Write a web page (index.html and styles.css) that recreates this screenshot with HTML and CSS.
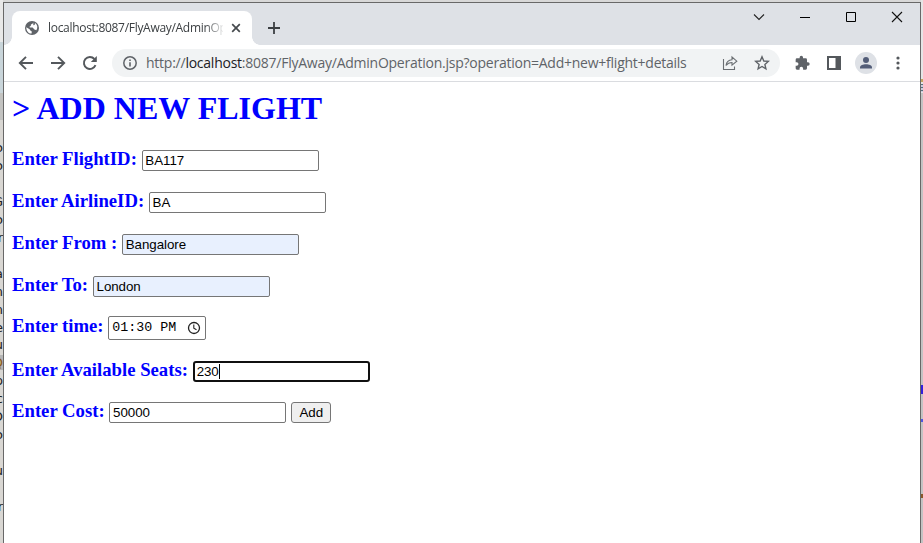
FILE: index.html
```
<!DOCTYPE html>
<html lang="en">
<head>
<meta charset="utf-8">
<title>Add new flight</title>
<link rel="stylesheet" href="styles.css">
</head>
<body>
<div class="desktop">
  <div class="edge-left"><i class="edge-pane"></i><pre class="code">o
o

G
so
r

a
n
n
e
u
<span class="mark">Q</span>
p
c
O
o

u

r</pre></div>
  <div class="window">
    <header class="tabs">
      <div class="tab">
        <svg class="globe" width="14" height="14" viewBox="0 0 14 14"><circle cx="7" cy="7" r="7" fill="#5f6368"/><path d="M1.3 6.2 4.6 8.2 5.6 9.8 6.8 10.6 6.6 12.6C3.6 12.6 1.2 10 1.3 6.2ZM8.2 1.4C7.6 3 6.5 3 5.9 3.6L5.8 5 4.6 5.6 4.8 6.4 7.6 6.6 9.4 8.4 11.4 9.2C13 6.6 12.6 3.6 10 2L9.6 4 8.4 4.2Z" fill="#fff"/></svg>
        <span class="tab-title">localhost:8087/FlyAway/AdminOperation</span>
        <svg class="tab-close" width="10" height="10" viewBox="0 0 10 10"><path d="M1.2 1.2 8.8 8.8M8.8 1.2 1.2 8.8" stroke="#45494d" stroke-width="1.7"/></svg>
      </div>
      <svg class="new-tab" width="12" height="12" viewBox="0 0 12 12"><path d="M6 0V12M0 6H12" stroke="#3c4043" stroke-width="1.8"/></svg>
      <div class="controls">
        <svg width="12" height="12" viewBox="0 0 12 12"><path d="M1 3.5 6 8.5 11 3.5" fill="none" stroke="#222" stroke-width="1.1"/></svg>
        <svg width="12" height="12" viewBox="0 0 12 12"><path d="M1 6.5H11" stroke="#000"/></svg>
        <svg width="12" height="12" viewBox="0 0 12 12"><path d="M1.5 1.5H10.500V10.500H1.500Z" fill="none" stroke="#000"/></svg>
        <svg width="12" height="12" viewBox="0 0 12 12"><path d="M1 1 11 11M11 1 1 11" stroke="#111" stroke-width="1.1"/></svg>
      </div>
    </header>
    <nav class="toolbar">
      <svg class="nav-icon" width="16" height="16" viewBox="0 0 16 16"><path d="M15 8H2M8 1.800 1.800 8 8 14.200" fill="none" stroke="#54585c" stroke-width="1.9"/></svg>
      <svg class="nav-icon" width="16" height="16" viewBox="0 0 16 16"><path d="M1 8H14M8 1.800 14.200 8 8 14.200" fill="none" stroke="#54585c" stroke-width="1.9"/></svg>
      <svg class="nav-icon" width="16" height="16" viewBox="0 0 16 16"><path d="M13.500 10.200A6 6 0 1 1 12.400 4" fill="none" stroke="#54585c" stroke-width="1.900"/><path d="M14.800 1V7H8.800Z" fill="#54585c"/></svg>
      <div class="address">
        <svg width="14" height="14" viewBox="0 0 14 14"><circle cx="7" cy="7" r="6.2" fill="none" stroke="#5f6368" stroke-width="1.500"/><path d="M7 6.200V10.500M7 3.500V5" stroke="#5f6368" stroke-width="1.600"/></svg>
        <span class="url">http://<b>localhost</b>:8087/FlyAway/AdminOperation.jsp?operation=Add+new+flight+details</span>
        <svg class="share" width="16" height="16" viewBox="0 0 16 16"><path d="M1.500 4V14.500H12.500V11.500M4 10.500C4.500 7 6.500 5 10 4.800V2L14.800 6.200 10 10.200V7.500C7.500 7.500 5.500 8.500 4 10.500Z" fill="none" stroke="#6a6e72" stroke-width="1.100"/></svg>
        <svg class="star" width="16" height="16" viewBox="0 0 16 16"><path d="M8 1.800 9.800 6 14.300 6.400 10.900 9.400 11.900 13.800 8 11.500 4.100 13.800 5.100 9.400 1.700 6.400 6.200 6Z" fill="none" stroke="#5f6368" stroke-width="1.400"/></svg>
      </div>
      <svg class="puzzle" width="16" height="16" viewBox="0 0 24 24"><path d="M21 11h-1.500V7a2 2 0 0 0-2-2h-4V3.500a2.500 2.500 0 0 0-5 0V5h-4a2 2 0 0 0-2 2v3.800H4a2.700 2.700 0 0 1 0 5.400H2.500V20a2 2 0 0 0 2 2h3.800v-1.500a2.700 2.700 0 0 1 5.400 0V22h3.800a2 2 0 0 0 2-2v-4H21a2.500 2.500 0 0 0 0-5Z" fill="#5f6368"/></svg>
      <svg class="panel" width="14" height="14" viewBox="0 0 14 14"><path d="M0 0H14V14H0ZM2 2V12H8.500V2Z" fill="#54585c" fill-rule="evenodd"/></svg>
      <svg class="avatar" width="22" height="22" viewBox="0 0 22 22"><circle cx="11" cy="11" r="11" fill="#dee1e6"/><circle cx="11" cy="8" r="3" fill="#535d78"/><path d="M5 16.500V15.500C5 11.200 17 11.200 17 15.500V16.500Z" fill="#535d78"/></svg>
      <svg class="dots" width="4" height="14" viewBox="0 0 4 14"><g fill="#54585c"><circle cx="2" cy="2" r="1.600"/><circle cx="2" cy="7" r="1.600"/><circle cx="2" cy="12" r="1.600"/></g></svg>
    </nav>
    <main class="page">
      <h1>&gt; ADD NEW FLIGHT</h1>
      <form>
        <div class="row"><label for="flight">Enter FlightID:</label><input id="flight" class="field" value="BA117"></div>
        <div class="row"><label for="airline">Enter AirlineID:</label><input id="airline" class="field" value="BA"></div>
        <div class="row"><label for="from">Enter From :</label><input id="from" class="field filled" value="Bangalore"></div>
        <div class="row"><label for="to">Enter To:</label><input id="to" class="field filled" value="London"></div>
        <div class="row row-time"><label>Enter time:</label><div class="field time"><span>01:30 PM</span><svg width="14" height="14" viewBox="0 0 14 14"><circle cx="7" cy="7" r="5.500" fill="none" stroke="#222" stroke-width="1.300"/><path d="M6.800 3.500V7.200L9.500 8.800" fill="none" stroke="#222" stroke-width="1.100"/></svg></div></div>
        <div class="row row-seats"><label>Enter Available Seats:</label><div class="field focused">230<i class="caret"></i></div></div>
        <div class="row"><label for="cost">Enter Cost:</label><input id="cost" class="field" value="50000"><button type="button">Add</button></div>
      </form>
    </main>
  </div>
  <div class="edge-right"><i class="bit tan"></i><i class="bit lines"></i><i class="bit blue"></i><i class="bit link"></i><i class="bit brown"></i></div>
</div>
</body>
</html>
```
FILE: styles.css
```
* { box-sizing: border-box; }
body { margin: 0; background: #d8d8d8; overflow: hidden; }
svg { display: block; flex: none; }
.desktop { display: flex; width: 923px; height: 543px; }
.edge-left { width: 3px; overflow: hidden; background: linear-gradient(#e8e8e8 0 42px, #c9d5da 42px 93px, #c3c3c1 93px 120px, #d9d7d3 120px); display: flex; flex-direction: column; align-items: flex-end; }
.edge-pane { height: 139px; flex: none; }
.code { margin: 0; font: 13px/17.95px "DejaVu Sans", sans-serif; color: #222; text-align: right; }
.mark { color: #8b5a14; background: #b5b5b5; }
.edge-right { width: 2px; overflow: hidden; background: linear-gradient(#e5e5e5 0 93px, #c3c3c3 93px); display: flex; flex-direction: column; }
.bit { width: 2px; flex: none; }
.tan { height: 3px; margin-top: 79px; background: #c3a55f; }
.lines { height: 8px; margin-top: 2px; background: repeating-linear-gradient(#58717e 0 1px, #ccd 1px 3px); }
.blue { height: 9px; margin-top: 293px; background: #3420dc; }
.link { height: 3px; margin-top: 25px; background: #5257e0; }
.brown { height: 4px; margin-top: 72px; background: #8b572b; }
.window { width: 918px; height: 541px; margin-top: 2px; border: 1px solid #686868; border-bottom: 0; background: #fff; }
.tabs { height: 42px; background: #dee1e6; display: flex; padding-left: 8px; }
.tab { position: relative; width: 240px; height: 34px; margin-top: 8px; background: #fff; border-radius: 8px 8px 0 0; display: flex; align-items: center; padding-left: 13px; }
.tab::before, .tab::after { content: ""; position: absolute; bottom: 0; width: 8px; height: 8px; }
.tab::before { left: -8px; background: radial-gradient(circle at 0 0, transparent 7.5px, #fff 8px); }
.tab::after { right: -8px; background: radial-gradient(circle at 100% 0, transparent 7.5px, #fff 8px); }
.tab-title { width: 175px; margin-left: 9px; overflow: hidden; white-space: nowrap; font: 12px/18px "Open Sans", sans-serif; letter-spacing: -0.3px; color: #3c4043; -webkit-mask-image: linear-gradient(90deg, #000 157px, transparent 177px); }
.tab-close { margin-left: 8px; }
.new-tab { margin: 19px 0 0 16px; }
.controls { margin: 8px 17px 0 auto; display: flex; gap: 34px; }
.toolbar { height: 37px; border-bottom: 1px solid #dadce0; display: flex; align-items: center; padding-left: 14px; }
.nav-icon { margin-right: 16px; }
.address { width: 668px; height: 28px; margin-left: -2px; padding-left: 11px; border-radius: 14px; background: #f1f3f4; display: flex; align-items: center; }
.url { width: 545px; margin-left: 9px; white-space: nowrap; font: 14px/20px "Open Sans", sans-serif; letter-spacing: -0.245px; color: #5f6368; }
.url b { font-weight: 400; color: #202124; }
.share { margin-left: 31px; }
.star { margin-left: 16px; }
.puzzle { margin-left: 14px; }
.panel { margin-left: 17px; }
.avatar { margin-left: 14px; }
.dots { margin-left: 19px; }
.page { padding: 8px; }
h1 { margin: 0; font: bold 32px/37px "Liberation Serif", serif; color: #00f; white-space: nowrap; }
form { padding-top: 23px; display: flex; flex-direction: column; gap: 21px; }
.row { height: 21px; display: flex; align-items: center; }
label { font: bold 18.72px/21px "Liberation Serif", serif; color: #00f; margin: -5px 4.68px 0 0; white-space: nowrap; }
.field { width: 177px; height: 21px; margin: 0; padding: 1px 3px 1px 2.8px; border: 1px solid #767676; border-radius: 2px; background: #fff; color: #000; font: 13.333px/17px "Liberation Sans", sans-serif; letter-spacing: -0.05px; outline: 0; }
.filled { background: #e8f0fe; }
.row-time { height: 24px; margin-top: -2px; }
.time { width: 98px; height: 24px; display: flex; align-items: center; justify-content: space-between; padding: 0 4px 0 3px; font: 13.333px/22px "Liberation Mono", monospace; letter-spacing: 0; white-space: nowrap; }
.row-seats { margin-bottom: -1px; }
.focused { border: 2px solid #101010; border-radius: 3px; padding: 0 2px; display: flex; align-items: center; }
.caret { width: 1px; height: 15px; background: #000; }
button { width: 40px; height: 21px; margin-left: 5px; padding: 0; border: 1px solid #767676; border-radius: 3px; background: #efefef; color: #000; font: 13.333px/17px "Liberation Sans", sans-serif; }
```
